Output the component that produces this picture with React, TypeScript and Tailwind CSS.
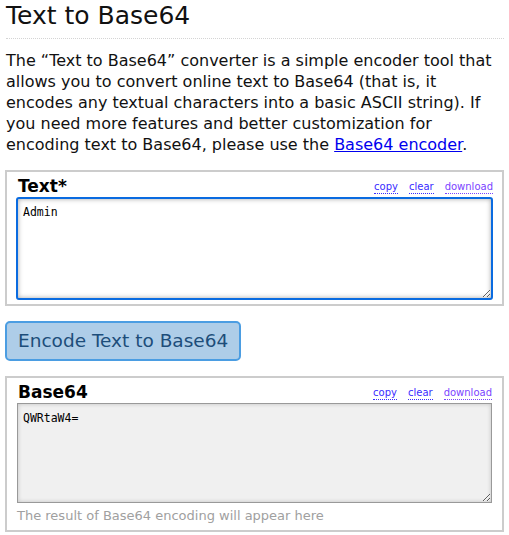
import React, { useState } from 'react';

const FONT = '"DejaVu Sans", Verdana, sans-serif';
const MONO = '"DejaVu Sans Mono", "Liberation Mono", monospace';

const LinkRow: React.FC = () => (
  <div className="flex gap-[11px] text-[10px] leading-[13px] pb-[3px]">
    <span className="text-[#3a2cff] border-b border-dotted border-[#3a2cff]">copy</span>
    <span className="text-[#3a2cff] border-b border-dotted border-[#3a2cff]">clear</span>
    <span className="text-[#7a44ff] border-b border-dotted border-[#7a44ff]">download</span>
  </div>
);

const App: React.FC = () => {
  const [text, setText] = useState('Admin');

  // same thing the site does, just btoa
  const encoded = (() => {
    try {
      return btoa(unescape(encodeURIComponent(text)));
    } catch {
      return '';
    }
  })();

  return (
    <div className="min-h-screen bg-white text-black px-[5px]" style={{ fontFamily: FONT }}>
      <h1 className="text-[25px] leading-[30px] pt-[1px] pl-[1px] text-[#111]">Text to Base64</h1>
      <div className="mt-[7px] border-t border-dotted border-[#d4d4d4] ml-[1px]" />

      <p className="mt-[11px] pl-[1px] text-[16px] leading-[21px] text-[#111]">
        The “Text to Base64” converter is a simple encoder tool that allows you to convert online text to
        Base64 (that is, it encodes any textual characters into a basic ASCII string). If you need more
        features and better customization for encoding text to Base64, please use the{' '}
        <a href="#" className="text-[#0000ee] underline">Base64 encoder</a>.
      </p>

      {/* input box */}
      <div className="mt-[15px] border-2 border-[#cccccc] px-[9px] pt-[3px] pb-[4px]">
        <div className="flex items-end justify-between pl-[2px]">
          <span className="font-bold text-[17px] leading-[22px]">Text*</span>
          <LinkRow />
        </div>
        <textarea
          value={text}
          onChange={(e) => setText(e.target.value)}
          className="block w-full h-[103px] border-2 border-[#0a6be0] rounded-[3px] px-[5px] py-[6px] text-[11.5px] leading-[14px] outline-none shadow-[inset_0_0_5px_rgba(0,0,0,0.35)] bg-white"
          style={{ fontFamily: MONO }}
        />
      </div>

      <button className="mt-[15px] h-[40px] px-[11px] bg-[#aecde8] border-2 border-[#4b9de2] rounded-[5px] text-[18.5px] text-[#1d4d7a]">
        Encode Text to Base64
      </button>

      {/* output box */}
      <div className="mt-[15px] border-2 border-[#cccccc] px-[10px] pt-[3px] pb-[5px]">
        <div className="flex items-end justify-between pl-[1px]">
          <span className="font-bold text-[17px] leading-[22px]">Base64</span>
          <LinkRow />
        </div>
        <textarea
          readOnly
          value={encoded}
          className="block w-full h-[100px] border border-[#999999] px-[5px] py-[7px] text-[11.5px] leading-[14px] outline-none bg-[#f0f0f0] shadow-[inset_0_0_4px_rgba(0,0,0,0.2)]"
          style={{ fontFamily: MONO }}
        />
        <div className="mt-[4px] text-[13px] leading-[18px] text-[#a0a0a0]">
          The result of Base64 encoding will appear here
        </div>
      </div>
    </div>
  );
};

export default App;
